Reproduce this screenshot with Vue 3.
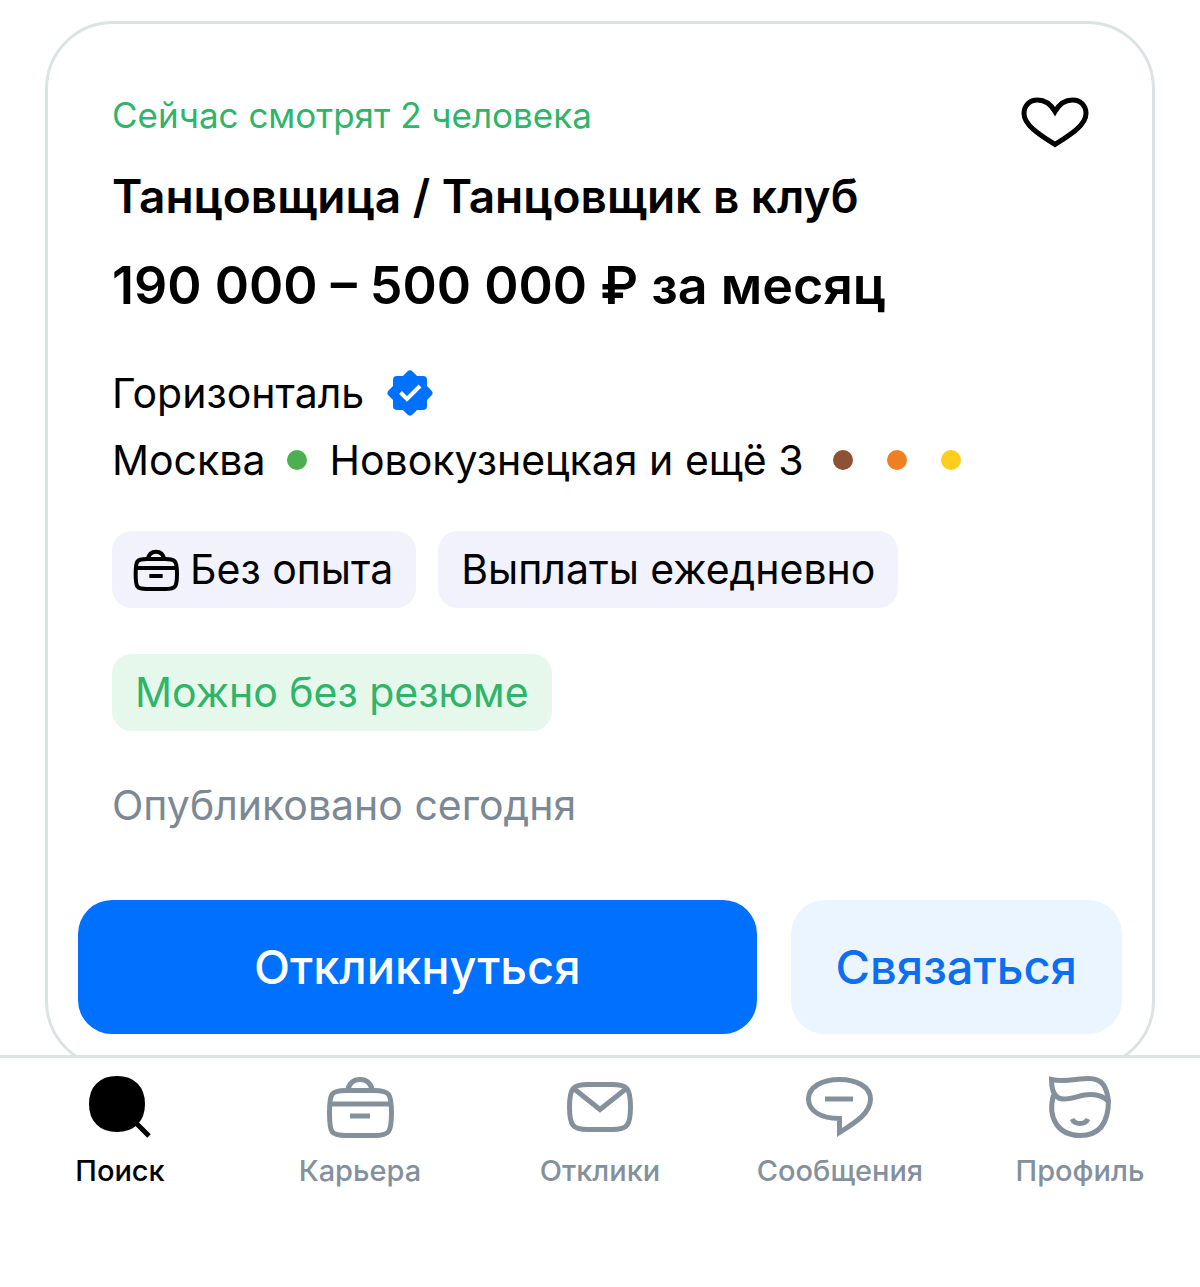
<template>
  <div class="screen">
    <main class="feed">
      <article class="card">
        <div class="info">
          <div class="top-row">
            <p class="viewers">Сейчас смотрят 2 человека</p>
            <button
              class="btn-like"
              type="button"
              aria-label="В избранное"
              :aria-pressed="liked"
              @click="liked = !liked"
            >
              <svg viewBox="0 0 72 72" :class="{ liked }">
                <path d="M36 58.500C22 49.500 5 39.500 5 27.500C5 19.500 10.500 14 18.500 14C26.500 14 32 18.500 36 25.500C40 18.500 45.500 14 53.500 14C61.500 14 67 19.500 67 27.500C67 39.500 50 49.500 36 58.500Z" />
              </svg>
            </button>
          </div>

          <h2 class="title">Танцовщица / Танцовщик в клуб</h2>
          <p class="salary">190 000 – 500 000 ₽ за месяц</p>

          <div class="company">
            <span>Горизонталь</span>
            <svg class="badge" viewBox="0 0 48 48" aria-hidden="true">
              <rect x="7" y="7" width="34" height="34" rx="4" />
              <rect x="7" y="7" width="34" height="34" rx="4" transform="rotate(45 24 24)" />
              <path d="M14.500 23.500L21 30L34 17" />
            </svg>
          </div>

          <div class="place">
            <span>Москва</span>
            <i class="dot green"></i>
            <span>Новокузнецкая и ещё 3</span>
            <span class="lines">
              <i class="dot" v-for="line in metroLines" :key="line" :class="line"></i>
            </span>
          </div>

          <div class="chips">
            <span class="chip with-icon">
              <svg viewBox="0 0 72 72" aria-hidden="true">
                <path v-for="d in bagPaths" :key="d" :d="d" />
              </svg>
              Без опыта
            </span>
            <span class="chip">Выплаты ежедневно</span>
          </div>
          <div class="chips">
            <span class="chip success">Можно без резюме</span>
          </div>

          <p class="published">Опубликовано сегодня</p>
        </div>

        <div class="actions">
          <button class="btn btn-primary" type="button">Откликнуться</button>
          <button class="btn btn-secondary" type="button">Связаться</button>
        </div>
      </article>
    </main>

    <nav class="tabbar">
      <a
        class="tab"
        href="#"
        v-for="tab in tabs"
        :key="tab.id"
        :class="[tab.id, { active: tab.id === activeTab }]"
        @click.prevent="activeTab = tab.id"
      >
        <svg viewBox="0 0 72 72" aria-hidden="true">
          <path v-for="d in tab.paths" :key="d" :d="d" />
        </svg>
        <span>{{ tab.name }}</span>
      </a>
    </nav>
  </div>
</template>

<script setup>
import { ref } from 'vue'

const liked = ref(false)
const activeTab = ref('search')

const metroLines = ['brown', 'orange', 'yellow']

// портфель: и в чипе, и в нижнем меню
const bagPaths = [
  'M5.500 42C5.500 22 7 19.500 22 19.500H50C65 19.500 67.500 22 67.500 42C67.500 62 65 64.500 50 64.500H22C7 64.500 5.500 62 5.500 42Z',
  'M23.500 20C25 12.500 29 8.500 36 8.500C43 8.500 47 12.500 48.500 20',
  'M6 33H67',
  'M26 45H46'
]

const tabs = [
  {
    id: 'search',
    name: 'Поиск',
    paths: [
      'M33 7.500C49 7.500 58.500 17 58.500 33C58.500 49 49 58.500 33 58.500C17 58.500 7.500 49 7.500 33C7.500 17 17 7.500 33 7.500Z',
      'M50 50L65 65'
    ]
  },
  { id: 'career', name: 'Карьера', paths: bagPaths },
  {
    id: 'replies',
    name: 'Отклики',
    paths: [
      'M5.500 36C5.500 17 9 13.500 24 13.500H48C63 13.500 66.500 17 66.500 36C66.500 55 63 58.500 48 58.500H24C9 58.500 5.500 55 5.500 36Z',
      'M9 17L36 38.500L63 17'
    ]
  },
  {
    id: 'messages',
    name: 'Сообщения',
    paths: [
      'M35.500 47.500C17 47.500 4.500 40 4.500 28C4.500 16 18 8.500 35.500 8.500C53 8.500 66.500 16 66.500 28C66.500 42 52 51 35.500 61.500Z',
      'M21 28H49'
    ]
  },
  {
    id: 'profile',
    name: 'Профиль',
    paths: [
      'M65 31C60 25.500 54 23.500 47 23.500C36 23.500 30 28 20 28C11 28 7.500 21 7.500 8.500C20 11.500 33 7.500 45 7.500C58 7.500 62.500 15 64.500 30',
      'M9.500 24C3 48 15 64.500 36 64.500C57 64.500 64.500 50 64.500 29',
      'M28 48C31 54 41 54 44 48'
    ]
  }
]
</script>

<style>
body {
  background: #fff;
}
</style>

<style scoped>
* {
  box-sizing: border-box;
}

.screen {
  height: 100vh;
  display: flex;
  flex-direction: column;
  font-family: Inter, 'Liberation Sans', sans-serif;
  color: #000;
}

p,
h2 {
  margin: 0;
}

svg {
  display: block;
  flex: none;
  fill: none;
  stroke: currentColor;
  stroke-width: 5;
}

/* список вакансий, карточка уходит под нижнее меню */
.feed {
  flex: 1;
  min-height: 0;
  overflow-y: auto;
  scrollbar-width: none;
  padding: 21px 45px 0;
}

.card {
  border: 3px solid #dce3e5;
  border-radius: 68px;
  padding: 62px 30px 32px;
}

.info {
  padding: 0 34px;
}

.top-row {
  display: flex;
  justify-content: space-between;
  align-items: flex-start;
}

.viewers {
  padding-top: 5px;
  font-size: 35px;
  line-height: 48px;
  color: #2fb469;
}

.btn-like {
  border: 0;
  padding: 0;
  margin-right: -3px;
  background: none;
  color: #000;
  cursor: pointer;
}

.btn-like svg {
  width: 72px;
  height: 72px;
}

.btn-like .liked {
  fill: currentColor;
}

.title {
  margin-top: 10px;
  font-size: 46px;
  line-height: 56px;
  font-weight: 600;
}

.salary {
  margin-top: 30px;
  font-size: 52px;
  line-height: 64px;
  font-weight: 600;
}

.company,
.place {
  display: flex;
  align-items: center;
  font-size: 41px;
  line-height: 52px;
}

.company {
  gap: 22px;
  margin-top: 49px;
}

.badge {
  width: 48px;
  height: 48px;
}

.badge rect {
  fill: #0070ff;
  stroke: none;
}

.badge path {
  stroke: #fff;
  stroke-width: 4;
}

.place {
  gap: 22px;
  margin-top: 15px;
}

.lines {
  display: flex;
  gap: 34px;
  margin-left: 8px;
}

.dot {
  width: 20px;
  height: 20px;
  border-radius: 50%;
}

.green {
  background: #4caf50;
}

.brown {
  background: #8d5133;
}

.orange {
  background: #ef7f22;
}

.yellow {
  background: #ffcd1c;
}

.chips {
  display: flex;
  flex-wrap: wrap;
  gap: 22px;
  margin-top: 46px;
}

.place + .chips {
  margin-top: 45px;
}

.chip {
  display: flex;
  align-items: center;
  gap: 10px;
  padding: 12px 23px;
  border-radius: 20px;
  background: #f1f2fb;
  font-size: 41px;
  line-height: 53px;
}

.with-icon {
  padding-left: 20px;
}

.chip svg {
  width: 48px;
  height: 48px;
  stroke-width: 6;
}

.success {
  background: #e6f8eb;
  color: #2fb469;
}

.published {
  margin-top: 48px;
  font-size: 41px;
  line-height: 52px;
  color: #7c8894;
}

.actions {
  display: flex;
  gap: 34px;
  margin-top: 69px;
}

.btn {
  border: 0;
  border-radius: 34px;
  padding: 38px 45px;
  font: inherit;
  font-size: 47px;
  line-height: 58px;
  font-weight: 500;
  cursor: pointer;
}

.btn-primary {
  flex: 1;
  background: #0070ff;
  color: #fff;
}

.btn-secondary {
  background: #eaf5ff;
  color: #0d6fee;
}

.tabbar {
  display: grid;
  grid-template-columns: repeat(5, 1fr);
  border-top: 3px solid #dce3e5;
  padding: 13px 0 96px;
  background: #fff;
}

.tab {
  display: flex;
  flex-direction: column;
  align-items: center;
  gap: 8px;
  color: #84919d;
  font-size: 29px;
  line-height: 40px;
  font-weight: 500;
  text-decoration: none;
}

.tab svg {
  width: 72px;
  height: 72px;
}

.tab.active {
  color: #000;
}

.search.active path:first-child {
  fill: currentColor;
}
</style>
